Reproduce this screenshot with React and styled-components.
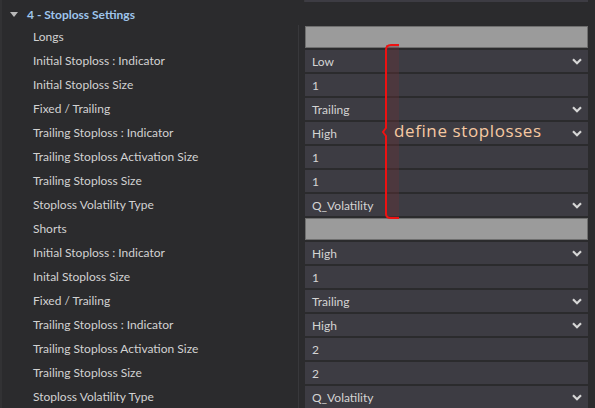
import React from 'react'
import styled, { createGlobalStyle } from 'styled-components'

const Global = createGlobalStyle`
  html, body {
    margin: 0;
    background: #2b2b2d;
  }
  body {
    font-family: Lato, "Noto Sans", sans-serif;
    font-size: 12px;
    color: #d2d2d2;
  }
`

const Panel = styled.div`
  position: relative;
  width: 595px;
  height: 408px;
  overflow: hidden;
  background: #2b2b2d;
  border-left: 2px solid #323234;
  box-sizing: border-box;
`

const TopStrip = styled.div`
  display: grid;
  grid-template-columns: 296px 1fr;
  height: 3px;

  div:last-child {
    margin: 0 7px 0 6px;
    background: #3d3c43;
    height: 2px;
    border-left: 1px solid #3a3a3d;
  }
`

const Header = styled.div`
  display: flex;
  align-items: center;
  height: 22px;
  padding-left: 8px;
  gap: 9px;
  font-weight: 700;
  color: #9fc5ec;
`

const Caret = styled.span`
  width: 0;
  height: 0;
  border-left: 4px solid transparent;
  border-right: 4px solid transparent;
  border-top: 5px solid #b9b9b9;
`

const Grid = styled.div`
  display: grid;
  grid-template-columns: 296px 1fr;
`

const Label = styled.div`
  height: 24px;
  display: flex;
  align-items: center;
  padding-left: 31px;
  padding-bottom: 1px;
  box-sizing: border-box;
`

const Cell = styled.div`
  height: 24px;
  padding: 1px 7px 1px 6px;
  box-sizing: border-box;
  border-left: 1px solid #38383b;
`

const Field = styled.div`
  height: 22px;
  box-sizing: border-box;
  display: flex;
  align-items: center;
  justify-content: space-between;
  padding: 0 6px 0 7px;
  background: ${(p) => (p.$group ? '#9b9b9b' : '#3d3c43')};
  border: ${(p) => (p.$group ? '1px solid #6f6f6f' : 'none')};
  color: #d4d4d4;
`

const Chevron = () => (
  <svg width="10" height="7" viewBox="0 0 10 7">
    <path d="M1 1.2 L5 5.2 L9 1.2" fill="none" stroke="#d6d6d6" strokeWidth="2.2" />
  </svg>
)

const Note = styled.div`
  position: absolute;
  left: 378px;
  top: 43px;
  width: 200px;
  height: 180px;
  pointer-events: none;
`

const Band = styled.div`
  position: absolute;
  left: 6px;
  top: 2px;
  width: 13px;
  height: 172px;
  background: rgba(110, 50, 55, 0.35);
`

const NoteText = styled.div`
  position: absolute;
  left: 14px;
  top: 76px;
  font-family: "Open Sans", "Noto Sans", sans-serif;
  font-size: 17px;
  letter-spacing: 0.6px;
  color: #f6c9a2;
  white-space: nowrap;
`

const rows = [
  ['Longs', null, 'group'],
  ['Initial Stoploss : Indicator', 'Low', 'select'],
  ['Initial Stoploss Size', '1', 'text'],
  ['Fixed / Trailing', 'Trailing', 'select'],
  ['Trailing Stoploss : Indicator', 'High', 'select'],
  ['Trailing Stoploss Activation Size', '1', 'text'],
  ['Trailing Stoploss Size', '1', 'text'],
  ['Stoploss Volatility Type', 'Q_Volatility', 'select'],
  ['Shorts', null, 'group'],
  ['Initial Stoploss : Indicator', 'High', 'select'],
  ['Inital Stoploss Size', '1', 'text'],
  ['Fixed / Trailing', 'Trailing', 'select'],
  ['Trailing Stoploss : Indicator', 'High', 'select'],
  ['Trailing Stoploss Activation Size', '2', 'text'],
  ['Trailing Stoploss Size', '2', 'text'],
  ['Stoploss Volatility Type', 'Q_Volatility', 'select'],
]

export default function App() {
  return (
    <Panel>
      <Global />
      <TopStrip>
        <div />
        <div />
      </TopStrip>
      <Header>
        <Caret />
        <span>4 - Stoploss Settings</span>
      </Header>
      <Grid>
        {rows.map(([label, value, kind], i) => (
          <React.Fragment key={i}>
            <Label>{label}</Label>
            <Cell>
              <Field $group={kind === 'group'}>
                <span>{value}</span>
                {kind === 'select' && <Chevron />}
              </Field>
            </Cell>
          </React.Fragment>
        ))}
      </Grid>
      <Note>
        <Band />
        <svg width="30" height="180" viewBox="0 0 30 180" style={{ position: 'absolute', left: 0, top: 0 }}>
          <path
            d="M19 2 L11 2 Q6 2 6 7 L6 85 L3 89 L6 93 L6 171 Q6 175 11 175 L19 175"
            fill="none"
            stroke="#ee1111"
            strokeWidth="2"
          />
        </svg>
        <NoteText>define stoplosses</NoteText>
      </Note>
    </Panel>
  )
}
